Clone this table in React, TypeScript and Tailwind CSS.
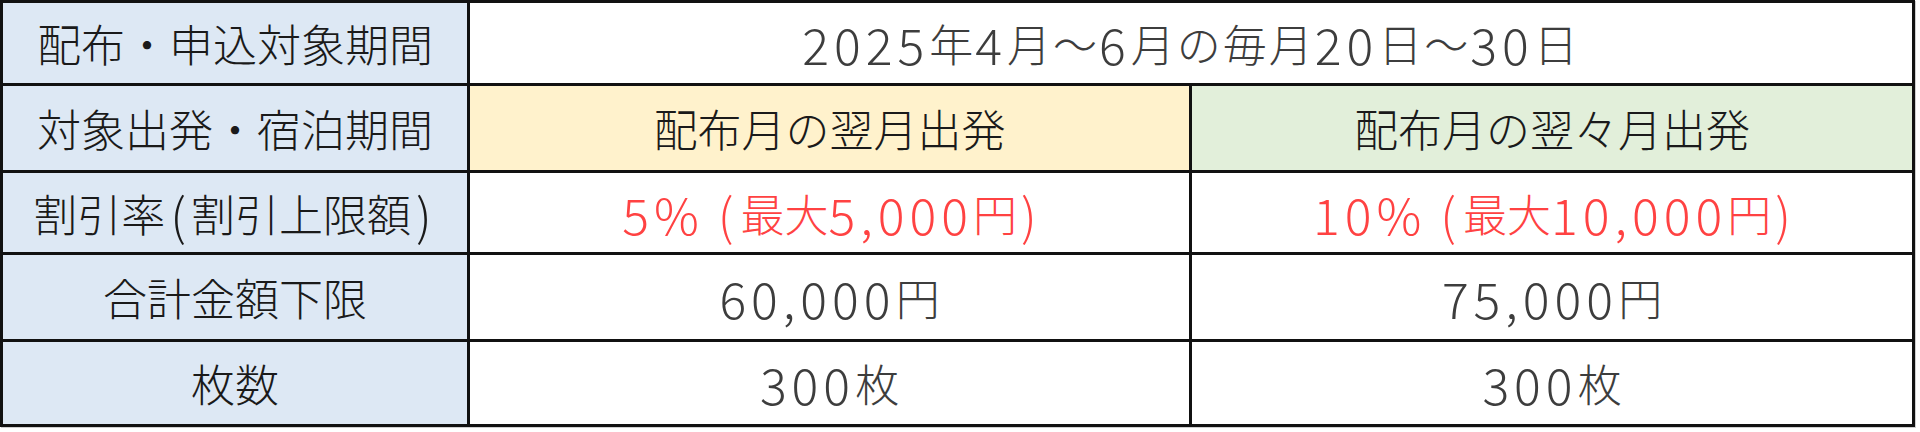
const labelCell = "flex items-center justify-center bg-[#dde8f4] text-[#1a1a1a]";
const valueCell = "flex items-center justify-center bg-white text-[#3d3d3d]";
const redCell = "flex items-center justify-center bg-white text-[#ff4242]";

// Latin digits in the sheet's font are taller and wider than the CJK font's
function N({ children }: { children: React.ReactNode }) {
  return <span className="text-[50px] tracking-[5px]">{children}</span>;
}

export default function App() {
  return (
    <div
      className="h-[432px] w-[1920px] bg-white"
      style={{ fontFamily: '"Noto Sans CJK JP", "Noto Sans", sans-serif' }}
    >
      <div className="grid w-[1915px] grid-cols-[464px_719px_720px] grid-rows-[80px_84px_79px_84px_82px] gap-[3px] border-[3px] border-[#111] bg-[#111] text-[44px] font-light leading-none shadow-[1px_1px_0_#cfcfcf]">
        <div className={labelCell}>配布・申込対象期間</div>
        <div className={`${valueCell} col-span-2 tracking-[2px]`}>
          <N>2025</N>年<N>4</N>月～<N>6</N>月の毎月<N>20</N>日～<N>30</N>日
        </div>

        <div className={labelCell}>対象出発・宿泊期間</div>
        <div className="flex items-center justify-center bg-[#fff2cc] text-[#1a1a1a]">配布月の翌月出発</div>
        <div className="flex items-center justify-center bg-[#e2efda] text-[#1a1a1a]">配布月の翌々月出発</div>

        <div className={labelCell}>
          割引率<span className="mx-[5px] text-[50px]">(</span>割引上限額<span className="mx-[5px] text-[50px]">)</span>
        </div>
        <div className={redCell}>
          <N>5%</N>
          <span className="ml-[14px] mr-[7px] text-[50px]">(</span>最大<N>5,000</N>円<span className="ml-[4px] text-[50px]">)</span>
        </div>
        <div className={redCell}>
          <N>10%</N>
          <span className="ml-[14px] mr-[7px] text-[50px]">(</span>最大<N>10,000</N>円<span className="ml-[4px] text-[50px]">)</span>
        </div>

        <div className={labelCell}>合計金額下限</div>
        <div className={valueCell}>
          <N>60,000</N>円
        </div>
        <div className={valueCell}>
          <N>75,000</N>円
        </div>

        <div className={labelCell}>枚数</div>
        <div className={valueCell}>
          <N>300</N>枚
        </div>
        <div className={valueCell}>
          <N>300</N>枚
        </div>
      </div>
    </div>
  );
}
